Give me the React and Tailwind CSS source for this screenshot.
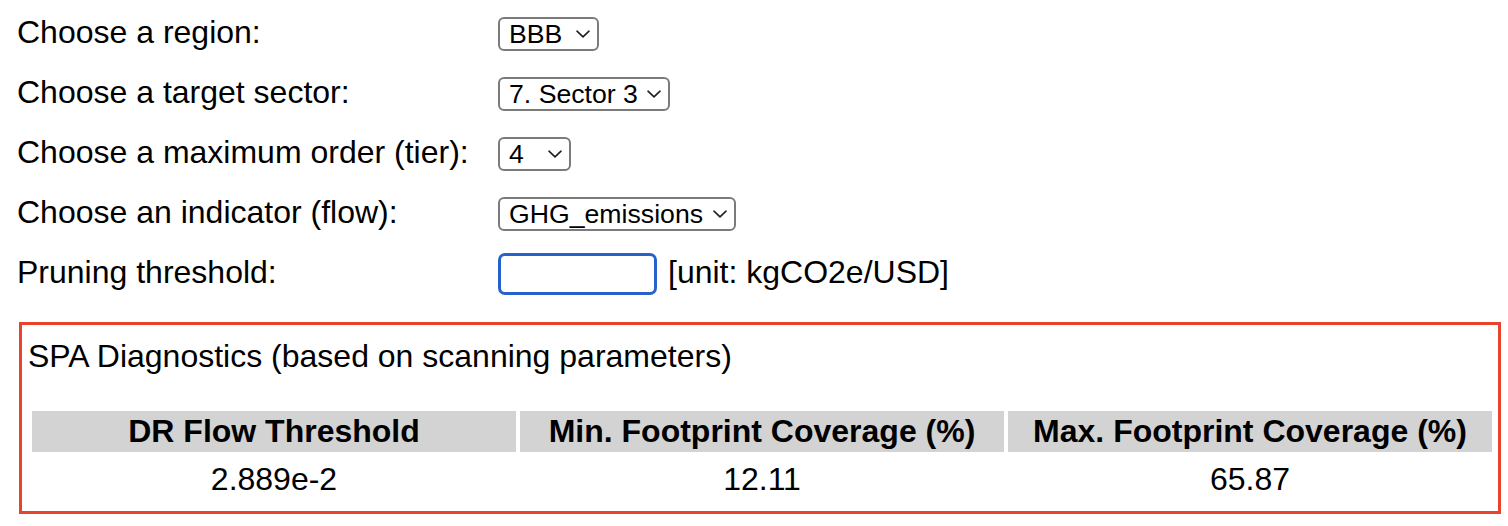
import React from "react";

function Chevron() {
  return (
    <svg width="14" height="8" viewBox="0 0 14 8" className="shrink-0">
      <path d="M1 1.2 L7 6.8 L13 1.2" fill="none" stroke="#1f1f1f" strokeWidth="1.6" strokeLinecap="round" strokeLinejoin="round" />
    </svg>
  );
}

function FakeSelect({ value, width }) {
  return (
    <div
      className="flex items-center justify-between h-[34px] box-border border-2 border-[#7b7b7b] rounded-[6px] pl-[9px] pr-[7px] text-[26.67px] leading-none bg-white"
      style={{ width }}
    >
      <span className="whitespace-nowrap">{value}</span>
      <Chevron />
    </div>
  );
}

function Row({ label, children }) {
  return (
    <div className="flex items-center h-[60px]">
      <div className="w-[481px] pb-[4px] whitespace-nowrap">{label}</div>
      {children}
    </div>
  );
}

export default function App() {
  const headers = ["DR Flow Threshold", "Min. Footprint Coverage (%)", "Max. Footprint Coverage (%)"];
  const values = ["2.889e-2", "12.11", "65.87"];
  return (
    <div className="w-[1508px] h-[526px] overflow-hidden bg-white text-black font-['Liberation_Sans',Arial,Helvetica,sans-serif] text-[32px] leading-[36px]">
      <div className="pt-[4px] pl-[17px]">
        <Row label="Choose a region:">
          <FakeSelect value="BBB" width="101px" />
        </Row>
        <Row label="Choose a target sector:">
          <FakeSelect value="7. Sector 3" width="172px" />
        </Row>
        <Row label="Choose a maximum order (tier):">
          <FakeSelect value="4" width="73px" />
        </Row>
        <Row label="Choose an indicator (flow):">
          <FakeSelect value="GHG_emissions" width="238px" />
        </Row>
        <Row label="Pruning threshold:">
          <div className="w-[159px] h-[42px] box-border border-[3px] border-[#2762cc] rounded-[7px] bg-white"></div>
          <div className="ml-[11px] pb-[4px] whitespace-nowrap">[unit: kgCO2e/USD]</div>
        </Row>
      </div>
      <div className="mt-[18px] ml-[19px] mr-[7px] h-[192px] box-border border-[3px] border-[#e8432d]">
        <div className="pl-[6px] pt-[13px] whitespace-nowrap">SPA Diagnostics (based on scanning parameters)</div>
        <div className="mt-[37px] pl-[10px] pr-[6px] grid grid-cols-3 gap-[4px]">
          {headers.map((h) => (
            <div key={h} className="h-[41px] pt-[2px] bg-[#d3d3d3] font-bold text-center whitespace-nowrap">
              {h}
            </div>
          ))}
          {values.map((v) => (
            <div key={v} className="h-[41px] pt-[5px] text-center whitespace-nowrap">
              {v}
            </div>
          ))}
        </div>
      </div>
    </div>
  );
}
